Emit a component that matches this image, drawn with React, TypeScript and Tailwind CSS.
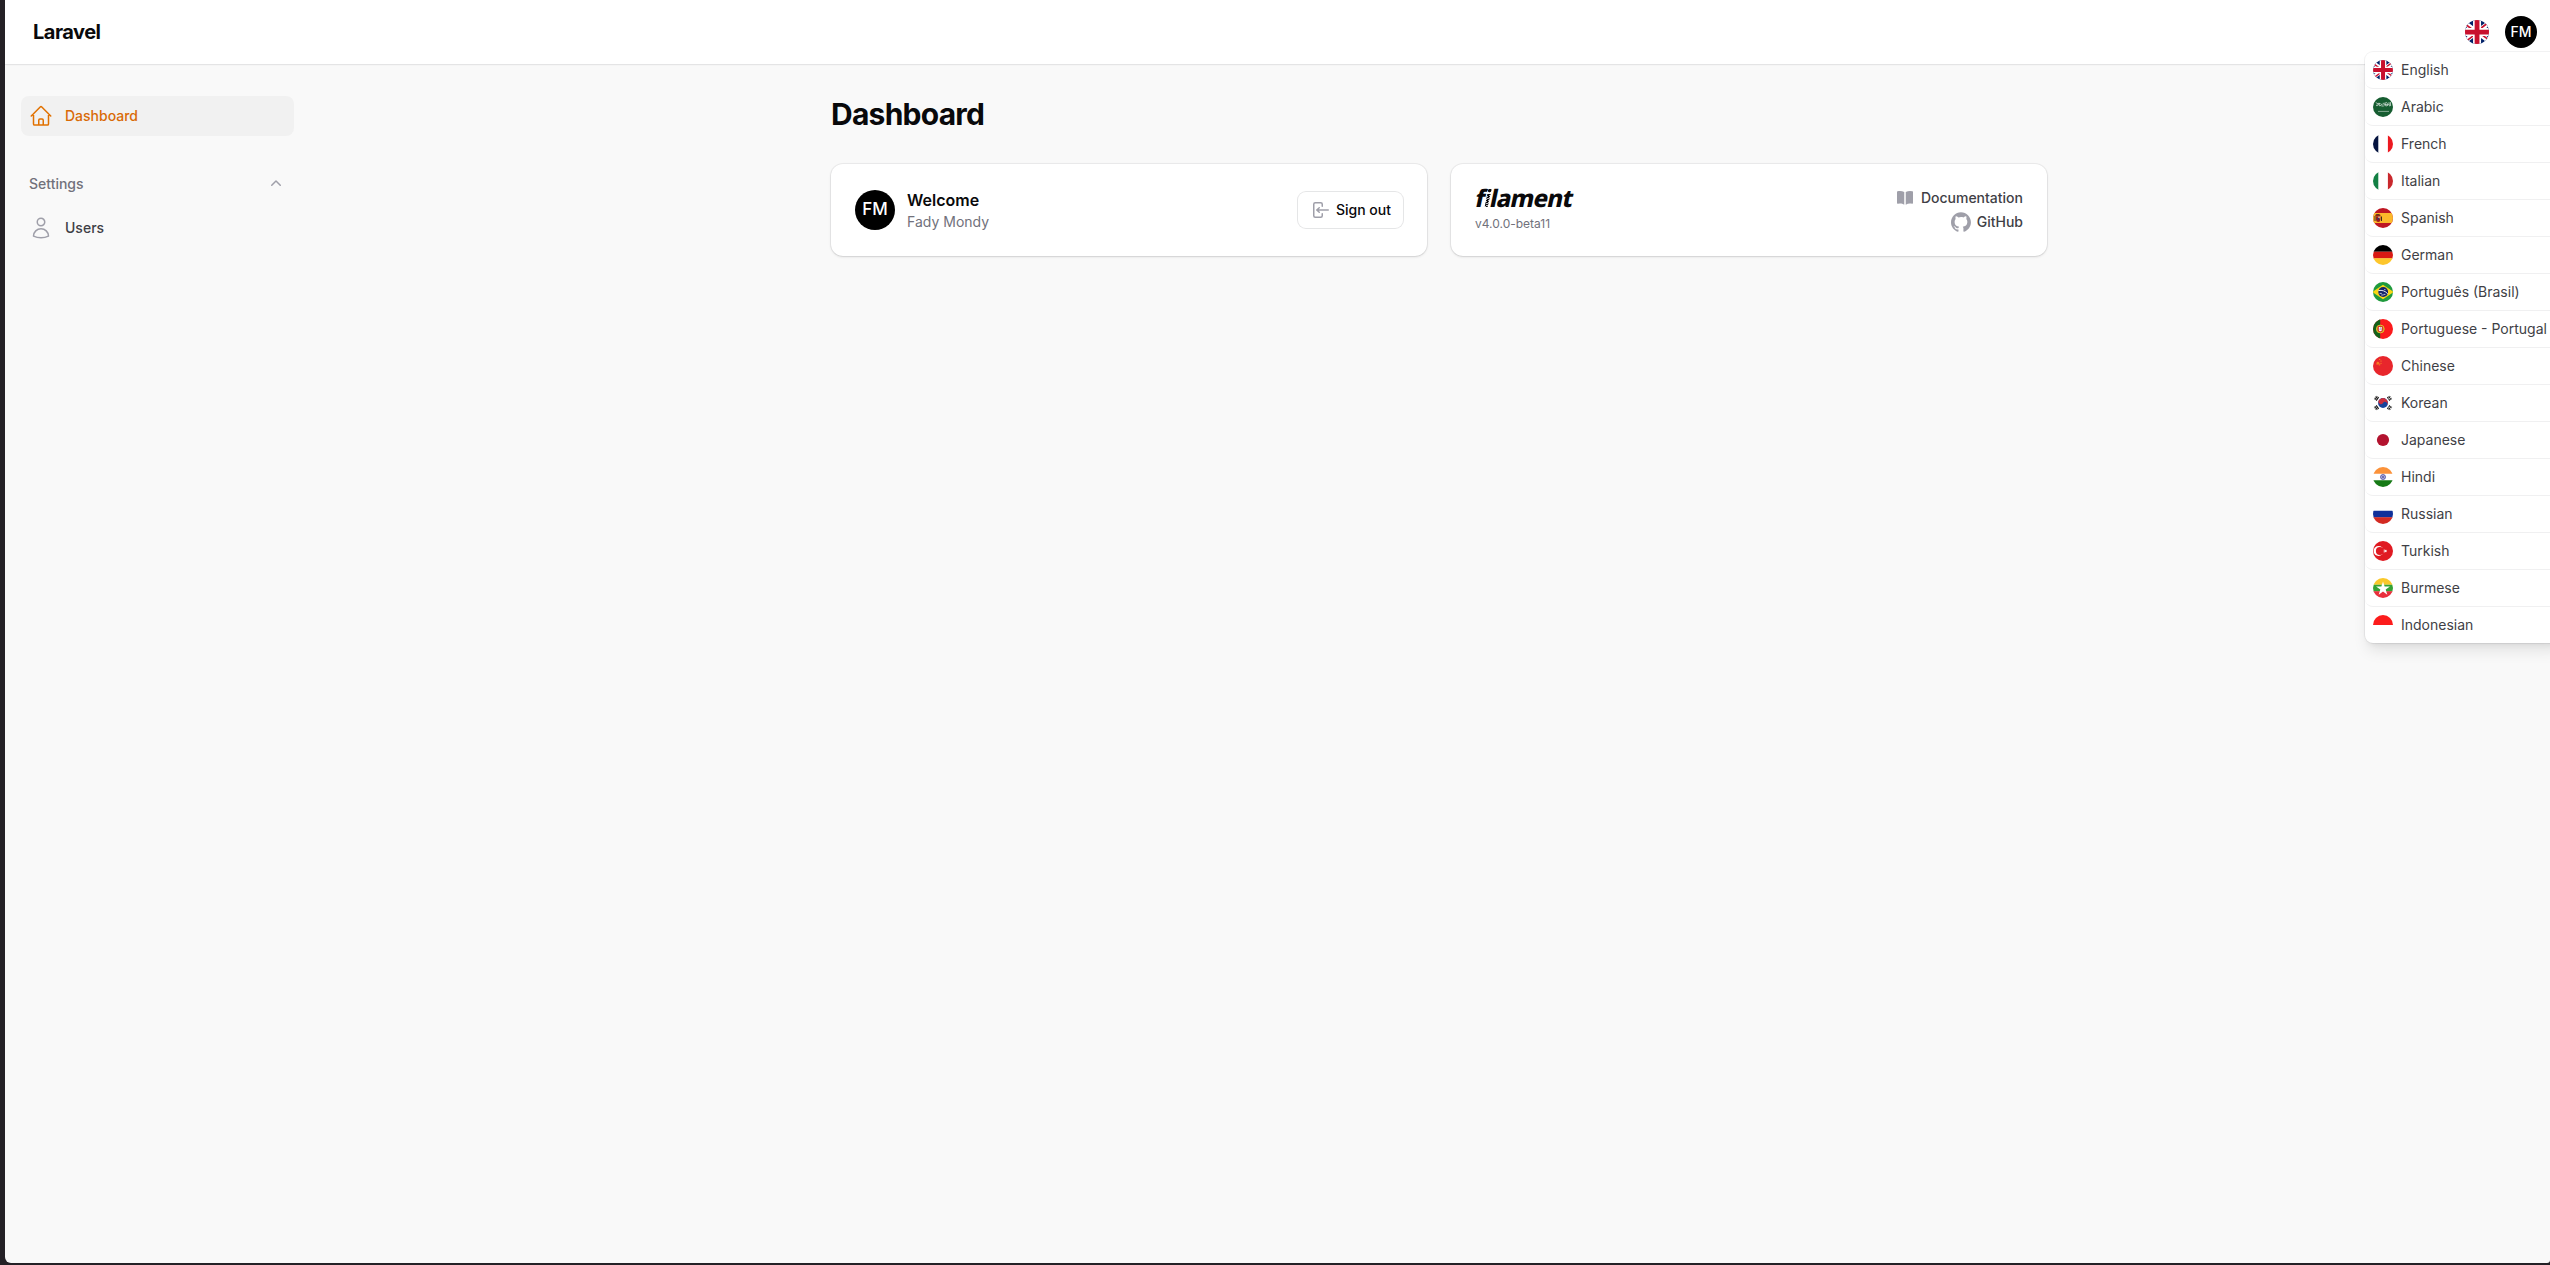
import type { ReactNode } from "react";

const svgBox = "0 0 20 20";

/* Flags are drawn in a 20x20 box and clipped to a circle by their wrapper. */
const flags: Record<string, ReactNode> = {
  gb: (
    <svg viewBox="80 0 480 480" className="size-full">
      <path fill="#012169" d="M0 0h640v480H0z" />
      <path fill="#FFF" d="m75 0 244 181L562 0h78v62L400 241l240 178v61h-80L320 301 81 480H0v-60l239-178L0 64V0z" />
      <path fill="#C8102E" d="m424 281 216 159v40L369 281zm-184 20 6 35L54 480H0zM640 0v3L391 191l2-44L590 0zM0 0l239 176h-60L0 42z" />
      <path fill="#FFF" d="M241 0v480h160V0zM0 160v160h640V160z" />
      <path fill="#C8102E" d="M0 193v96h640v-96zM273 0v480h96V0z" />
    </svg>
  ),
  sa: (
    <svg viewBox={svgBox} className="size-full">
      <path fill="#165d31" d="M0 0h20v20H0z" />
      <path
        fill="none"
        stroke="#fff"
        strokeWidth=".65"
        strokeLinecap="round"
        d="M3.3 5.6l1 1M3.4 8.6c1 .6 1.7-.2 1.9-1M6 6.2l.3 2.6 1.6-.3M8 7.2l1.2.4M8.8 9h1.6M10.2 6.2c-.2 1 .6 1.6 1 .6M12.2 5.6v3.2M13.6 5.4c1 .3.3 1.4 1 1.8M13.4 8.9c1-.1 1.9-.6 1.8-1.6M16 5.6l.4 3.3M17.4 5.5l.2 3.2M4 7l3-.4M11.6 7.7h3"
      />
      <path fill="none" stroke="#fff" strokeWidth=".6" d="M5 14.4h11" opacity=".8" />
    </svg>
  ),
  fr: (
    <svg viewBox={svgBox} className="size-full">
      <path fill="#fff" d="M0 0h20v20H0z" />
      <path fill="#051440" d="M0 0h5.3v20H0z" />
      <path fill="#ec1920" d="M14.9 0H20v20h-5.1z" />
    </svg>
  ),
  it: (
    <svg viewBox={svgBox} className="size-full">
      <path fill="#fff" d="M0 0h20v20H0z" />
      <path fill="#128044" d="M0 0h5.3v20H0z" />
      <path fill="#c9282d" d="M14.9 0H20v20h-5.1z" />
    </svg>
  ),
  es: (
    <svg viewBox={svgBox} className="size-full">
      <path fill="#be1622" d="M0 0h20v20H0z" />
      <path fill="#fcb82a" d="M0 5h20v10H0z" />
      <path fill="#8f2a14" d="M2.6 6.6h4.6l.4 1.4H2.2z" />
      <path fill="#3b2a20" d="M1.5 8h1v5h-1zM8 8.4h1V13H8zM3.2 6h3.2v.8H3.2z" />
      <path fill="#a01d1d" d="M3 8.2h4.4v3.6a2.2 2.2 0 0 1-4.4 0z" />
      <path fill="#d9c0a8" d="M5.3 8.6h1.6v1.6H5.3z" />
      <circle cx="5.2" cy="10.8" r=".9" fill="#1b3a7a" />
    </svg>
  ),
  de: (
    <svg viewBox={svgBox} className="size-full">
      <path fill="#000" d="M0 0h20v6.8H0z" />
      <path fill="#d91a14" d="M0 6.7h20v6.8H0z" />
      <path fill="#fdc62c" d="M0 13.3h20V20H0z" />
    </svg>
  ),
  br: (
    <svg viewBox={svgBox} className="size-full">
      <path fill="#1f9a3d" d="M0 0h20v20H0z" />
      <path fill="#f9d616" d="M10 2.7 20.7 10 10 17.3-.7 10z" />
      <circle cx="10.2" cy="10" r="4.9" fill="#14246a" />
      <path fill="none" stroke="#fff" strokeWidth=".9" d="M5.4 8.6c3.6-.8 7 .4 9.4 3.3" />
      <path fill="none" stroke="#fff" strokeWidth=".7" strokeLinecap="round" d="M7 11.4h1.4M8.6 13h1.6M11 12.4h1M11.6 7.6h.5" />
    </svg>
  ),
  pt: (
    <svg viewBox={svgBox} className="size-full">
      <path fill="#fb1a1c" d="M0 0h20v20H0z" />
      <path fill="#11611b" d="M0 0h7.2v20H0z" />
      <circle cx="7.3" cy="10" r="3.9" fill="#b78a24" stroke="#e8c52d" strokeWidth=".9" />
      <path fill="#e21f26" d="M4.9 7.2h4.8v3.6a2.4 2.4 0 0 1-4.8 0z" />
      <path fill="#fff" d="M5.8 8.1h3v2.6a1.5 1.5 0 0 1-3 0z" />
      <path fill="#3a53a4" d="M7 8.4h.7v.8H7zM7 9.7h.7v.8H7zM6.1 9.7h.5v.8h-.5zM8.1 9.7h.5v.8h-.5z" />
    </svg>
  ),
  cn: (
    <svg viewBox={svgBox} className="size-full">
      <path fill="#e8262c" d="M0 0h20v20H0z" />
      <g fill="#fb9c22">
        <path d="M3.9 5.5 5.2 6.300l1-.9-.2 1.500 1 .8-1.400.2-.3 1.600-1-1.300-1.300.2.6-1.100z" opacity=".75" />
        <circle cx="6.7" cy="3.3" r=".6" />
        <circle cx="8" cy="5" r=".55" />
        <circle cx="8" cy="7.2" r=".55" />
        <circle cx="6.7" cy="8.8" r=".6" />
      </g>
    </svg>
  ),
  kr: (
    <svg viewBox={svgBox} className="size-full">
      <path fill="#fff" d="M0 0h20v20H0z" />
      <circle cx="10" cy="10" r="4.9" fill="#17439b" />
      <path fill="#cc2e3c" d="M5.1 10a4.9 4.9 0 0 1 9.8 0a2.45 2.45 0 0 0-4.9 0a2.45 2.45 0 0 1-4.9 0z" transform="rotate(33 10 10)" />
      <g stroke="#111" strokeWidth="1.1" fill="none">
        <path d="M.9 6.200 3.300 2.700M2.200 7l2.400-3.500M3.500 7.800l2.400-3.500" transform="translate(-.3 -.2)" />
        <path d="M19.100 13.800 16.700 17.300M17.800 13l-2.400 3.500M16.500 12.200l-2.400 3.500" strokeDasharray="1.900 .5" transform="translate(.3 .2)" />
        <path d="M19.100 6.200 16.700 2.700M17.800 7l-2.400-3.500M16.500 7.800l-2.400-3.500" strokeDasharray="1.900 .5" transform="translate(.3 -.2)" />
        <path d="M.9 13.800 3.300 17.300M2.200 13l2.400 3.500M3.500 12.200l2.400 3.500" transform="translate(-.3 .2)" />
      </g>
    </svg>
  ),
  jp: (
    <svg viewBox={svgBox} className="size-full">
      <path fill="#fff" d="M0 0h20v20H0z" />
      <circle cx="10" cy="10" r="6.1" fill="#b3132f" />
    </svg>
  ),
  in: (
    <svg viewBox={svgBox} className="size-full">
      <path fill="#fff" d="M0 0h20v20H0z" />
      <path fill="#fb923a" d="M0 0h20v6.700H0z" />
      <path fill="#167a16" d="M0 13.300h20V20H0z" />
      <circle cx="10" cy="10" r="2.500" fill="#d9d9ee" stroke="#2a2a90" strokeWidth=".7" />
      <path stroke="#2a2a90" strokeWidth=".4" d="M8 10h4M10 8v4M8.600 11.400l2.800-2.800M8.600 8.600l2.800 2.800" />
    </svg>
  ),
  ru: (
    <svg viewBox={svgBox} className="size-full">
      <path fill="#fff" d="M0 0h20v6.700H0z" />
      <path fill="#10309a" d="M0 6.700h20v6.800H0z" />
      <path fill="#d32a22" d="M0 13.300h20V20H0z" />
    </svg>
  ),
  tr: (
    <svg viewBox={svgBox} className="size-full">
      <path fill="#e01a22" d="M0 0h20v20H0z" />
      <circle cx="5.600" cy="10" r="5" fill="#fff" />
      <circle cx="6.900" cy="10" r="4" fill="#e01a22" />
      <path fill="#fff" d="m10.100 10 1.500-.5v-1.600l1 1.300 1.500-.5-.9 1.300.9 1.300-1.500-.5-1 1.300v-1.600z" />
    </svg>
  ),
  mm: (
    <svg viewBox={svgBox} className="size-full">
      <path fill="#fac82a" d="M0 0h20v6.800H0z" />
      <path fill="#35a235" d="M0 6.700h20v6.800H0z" />
      <path fill="#e92f3c" d="M0 13.300h20V20H0z" />
      <path fill="#fff" d="m10 3.500 1.650 5h5.300l-4.280 3.100 1.640 5.040L10 13.500l-4.300 3.140 1.630-5.040L3.050 8.500h5.300z" />
    </svg>
  ),
  id: (
    <svg viewBox={svgBox} className="size-full">
      <path fill="#fff" d="M0 0h20v20H0z" />
      <path fill="#fc1c1c" d="M0 0h20v10H0z" />
    </svg>
  ),
};

const languages: [string, string][] = [
  ["gb", "English"],
  ["sa", "Arabic"],
  ["fr", "French"],
  ["it", "Italian"],
  ["es", "Spanish"],
  ["de", "German"],
  ["br", "Português (Brasil)"],
  ["pt", "Portuguese - Portugal"],
  ["cn", "Chinese"],
  ["kr", "Korean"],
  ["jp", "Japanese"],
  ["in", "Hindi"],
  ["ru", "Russian"],
  ["tr", "Turkish"],
  ["mm", "Burmese"],
  ["id", "Indonesian"],
];

function LanguageMenu() {
  return (
    <div className="absolute top-8 -left-[100px] z-10 w-[200px] rounded-lg bg-white shadow-lg ring-1 ring-gray-950/5">
      {languages.map(([code, label]) => (
        <div key={code} className="flex h-[37px] items-center gap-2 rounded-lg border-b border-[#f0f0f1] px-2 last:h-9 last:border-b-0">
          <span className="size-5 shrink-0 overflow-hidden rounded-full">{flags[code]}</span>
          <span className="text-sm whitespace-nowrap text-[#3f3f46]">{label}</span>
        </div>
      ))}
    </div>
  );
}

function Topbar() {
  return (
    <header className="flex h-16 shrink-0 items-center justify-between bg-white pr-[13px] pl-7 shadow-xs ring-1 ring-gray-950/5">
      <div className="text-xl leading-5 font-bold tracking-tight text-zinc-950">Laravel</div>
      <div className="flex items-center gap-4">
        <div className="relative size-6">
          <div className="size-6 overflow-hidden rounded-full">{flags.gb}</div>
          <LanguageMenu />
        </div>
        <div className="flex size-8 items-center justify-center rounded-full bg-black text-sm font-medium text-white">FM</div>
      </div>
    </header>
  );
}

function Sidebar() {
  return (
    <aside className="w-[323px] shrink-0 pt-8 pr-[34px] pl-4">
      <a className="flex h-10 items-center gap-3 rounded-lg bg-[#f1f1f1] px-2 text-sm font-medium text-[#d96a06]">
        <svg viewBox="0 0 24 24" className="size-6" fill="none" stroke="#e17100" strokeWidth="1.5" strokeLinecap="round" strokeLinejoin="round">
          <path d="m2.250 12 8.954-8.955c.44-.439 1.152-.439 1.591 0L21.750 12M4.500 9.750v10.125c0 .621.504 1.125 1.125 1.125H9.750v-4.875c0-.621.504-1.125 1.125-1.125h2.250c.621 0 1.125.504 1.125 1.125V21h4.125c.621 0 1.125-.504 1.125-1.125V9.750M8.250 21h8.250" />
        </svg>
        Dashboard
      </a>
      <div className="mt-7 flex h-10 items-center justify-between px-2 text-sm font-medium text-[#71717b]">
        Settings
        <svg viewBox="0 0 20 20" className="size-5" fill="#9f9fa9">
          <path fillRule="evenodd" clipRule="evenodd" d="M9.470 6.470a.75.75 0 0 1 1.060 0l4.250 4.250a.75.75 0 1 1-1.060 1.060L10 8.060l-3.720 3.720a.75.75 0 0 1-1.060-1.060l4.250-4.250Z" />
        </svg>
      </div>
      <a className="mt-1 flex h-10 items-center gap-3 px-2 text-sm font-medium text-[#3f3f46]">
        <svg viewBox="0 0 24 24" className="size-6" fill="none" stroke="#9f9fa9" strokeWidth="1.5" strokeLinecap="round" strokeLinejoin="round">
          <path d="M15.750 6a3.750 3.750 0 1 1-7.500 0 3.750 3.750 0 0 1 7.500 0ZM4.501 20.118a7.500 7.500 0 0 1 14.998 0A17.933 17.933 0 0 1 12 21.750c-2.676 0-5.216-.584-7.499-1.632Z" />
        </svg>
        Users
      </a>
    </aside>
  );
}

const card = "flex h-[92px] items-center justify-between rounded-xl bg-white px-6 shadow-sm ring-1 ring-gray-950/5";

function AccountCard() {
  return (
    <section className={card}>
      <div className="flex items-center gap-3">
        <div className="flex size-10 items-center justify-center rounded-full bg-black text-[17px] font-medium text-white">FM</div>
        <div>
          <h2 className="text-base leading-6 font-semibold text-zinc-950">Welcome</h2>
          <p className="text-sm leading-5 text-[#71717b]">Fady Mondy</p>
        </div>
      </div>
      <button className="flex h-9 items-center gap-1.5 rounded-lg bg-white px-3 text-sm font-medium text-zinc-950 ring-1 ring-gray-950/10">
        <svg viewBox="0 0 20 20" className="size-5" fill="#9f9fa9">
          <path fillRule="evenodd" clipRule="evenodd" d="M3 4.250A2.250 2.250 0 0 1 5.250 2h5.500A2.250 2.250 0 0 1 13 4.250v2a.75.75 0 0 1-1.500 0v-2a.75.75 0 0 0-.75-.75h-5.500a.75.75 0 0 0-.75.75v11.500c0 .414.336.75.75.75h5.500a.75.75 0 0 0 .75-.75v-2a.75.75 0 0 1 1.500 0v2A2.250 2.250 0 0 1 10.750 18h-5.500A2.250 2.250 0 0 1 3 15.750V4.250Z" />
          <path fillRule="evenodd" clipRule="evenodd" d="M19 10a.75.75 0 0 0-.75-.75H8.704l1.048-.943a.75.75 0 1 0-1.004-1.114l-2.500 2.250a.75.75 0 0 0 0 1.114l2.500 2.250a.75.75 0 1 0 1.004-1.114l-1.048-.943h9.546A.75.75 0 0 0 19 10Z" />
        </svg>
        Sign out
      </button>
    </section>
  );
}

function FilamentCard() {
  return (
    <section className={card}>
      <div className="flex flex-col items-start">
        <div className="-ml-0.5 h-6 origin-bottom-left -skew-x-12 font-['Noto_Sans'] text-[24px] leading-5 font-extrabold tracking-[-0.8px] whitespace-nowrap text-zinc-950">
          f
          <span className="bg-[linear-gradient(#09090b_0_42%,transparent_42%),repeating-linear-gradient(155deg,#09090b_0_1.4px,#b4b4bb_1.4px_2.2px)] bg-clip-text font-semibold text-transparent">
            i
          </span>
          lament
        </div>
        <p className="mt-1 text-xs leading-4 text-[#71717b]">v4.0.0-beta11</p>
      </div>
      <div className="flex flex-col items-end gap-1 text-sm font-medium text-[#3f3f46]">
        <a className="flex h-5 items-center gap-1.5">
          <svg viewBox="0 0 20 20" className="size-5" fill="#9f9fa9">
            <path d="M10.750 16.820A7.462 7.462 0 0 1 15 15.500c.71 0 1.396.098 2.046.282A.75.75 0 0 0 18 15.060v-11a.75.75 0 0 0-.546-.721A9.006 9.006 0 0 0 15 3a8.963 8.963 0 0 0-4.250 1.065V16.820ZM9.250 4.065A8.963 8.963 0 0 0 5 3c-.85 0-1.673.118-2.454.339A.75.75 0 0 0 2 4.060v11a.75.75 0 0 0 .954.721A7.506 7.506 0 0 1 5 15.500c1.579 0 3.042.487 4.250 1.320V4.065Z" />
          </svg>
          Documentation
        </a>
        <a className="flex h-5 items-center gap-1.5">
          <svg viewBox="0 0 98 96" className="size-5" fill="#9f9fa9">
            <path
              fillRule="evenodd"
              clipRule="evenodd"
              d="M48.854 0C21.839 0 0 22 0 49.217c0 21.756 13.993 40.172 33.405 46.69 2.427.49 3.316-1.059 3.316-2.362 0-1.141-.08-5.052-.08-9.127-13.59 2.934-16.42-5.867-16.42-5.867-2.184-5.704-5.42-7.17-5.42-7.17-4.448-3.015.324-3.015.324-3.015 4.934.326 7.523 5.052 7.523 5.052 4.367 7.496 11.404 5.378 14.235 4.074.404-3.178 1.699-5.378 3.074-6.6-10.839-1.141-22.243-5.378-22.243-24.283 0-5.378 1.94-9.778 5.014-13.2-.485-1.222-2.184-6.275.486-13.038 0 0 4.125-1.304 13.426 5.052a46.97 46.97 0 0 1 12.214-1.63c4.125 0 8.33.571 12.213 1.63 9.302-6.356 13.427-5.052 13.427-5.052 2.67 6.763.97 11.816.485 13.038 3.155 3.422 5.015 7.822 5.015 13.2 0 18.905-11.404 23.06-22.324 24.283 1.78 1.548 3.316 4.481 3.316 9.126 0 6.6-.08 11.897-.08 13.526 0 1.304.89 2.853 3.316 2.364 19.412-6.52 33.405-24.935 33.405-46.691C97.707 22 75.788 0 48.854 0z"
            />
          </svg>
          GitHub
        </a>
      </div>
    </section>
  );
}

export default function App() {
  return (
    <div className="h-[1265px] w-full overflow-hidden bg-[#242126] pb-0.5 pl-[5px] font-['Inter',sans-serif]">
      <div className="flex h-full flex-col overflow-hidden rounded-bl-md rounded-br-[3px] bg-[#f9f9f9]">
        <Topbar />
        <div className="flex flex-1">
          <Sidebar />
          <main className="flex flex-1 justify-center pt-8">
            <div className="flex w-[1216px] flex-col gap-8">
              <h1 className="text-3xl leading-9 font-bold tracking-tight text-zinc-950">Dashboard</h1>
              <div className="grid grid-cols-2 gap-6">
                <AccountCard />
                <FilamentCard />
              </div>
            </div>
          </main>
        </div>
      </div>
    </div>
  );
}
